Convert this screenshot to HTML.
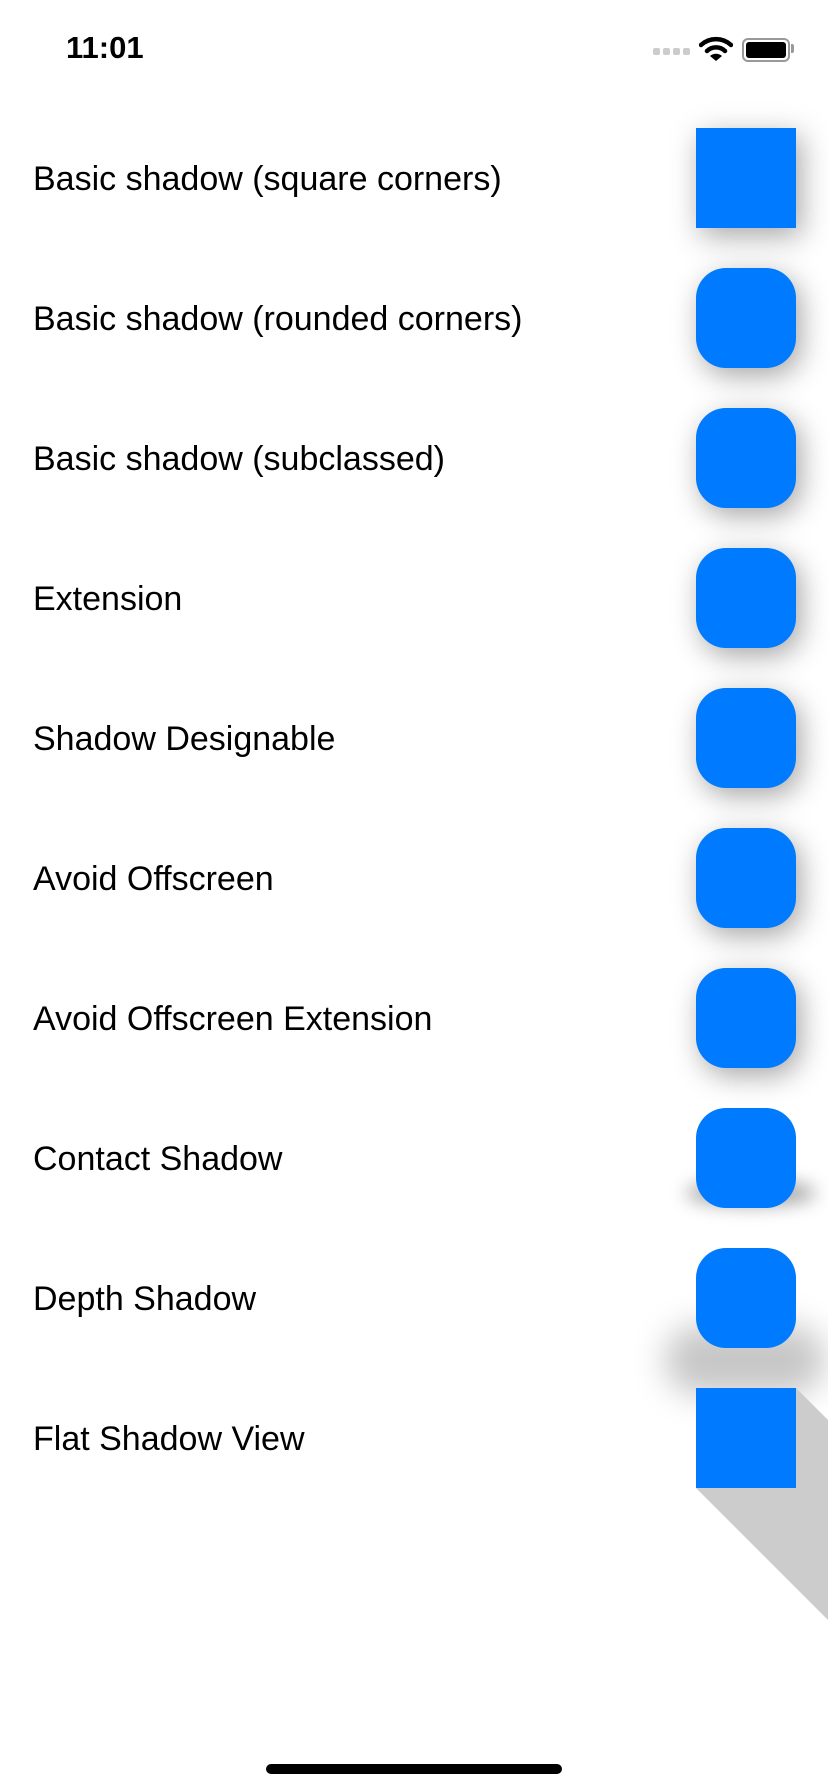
<!DOCTYPE html>
<html><head><meta charset="utf-8"><style>
html,body{margin:0;padding:0;background:#fff;}
body{width:828px;height:1792px;position:relative;overflow:hidden;font-family:"Liberation Sans",sans-serif;}
.t{position:absolute;left:33px;font-size:34px;color:#000;line-height:40px;}
.b{position:absolute;left:696px;width:100px;height:100px;background:#007aff;border-radius:30px;}
.s{box-shadow:5px 8px 28px rgba(0,0,0,.35);}
</style></head><body>
<div style="position:absolute;left:66px;top:30px;font-size:31px;font-weight:bold;">11:01</div>
<div style="position:absolute;left:653px;top:48px;line-height:0">
<span style="display:inline-block;width:7px;height:7px;background:#ccc;border-radius:2px;margin-right:3px"></span><span style="display:inline-block;width:7px;height:7px;background:#ccc;border-radius:2px;margin-right:3px"></span><span style="display:inline-block;width:7px;height:7px;background:#ccc;border-radius:2px;margin-right:3px"></span><span style="display:inline-block;width:7px;height:7px;background:#ccc;border-radius:2px"></span></div>
<svg style="position:absolute;left:699px;top:36px" width="34" height="26" viewBox="0 0 34 26"><path d="M2 9 A22 22 0 0 1 32 9" stroke="#000" stroke-width="4.5" fill="none" stroke-linecap="round"/><path d="M8 15 A13 13 0 0 1 26 15" stroke="#000" stroke-width="4.5" fill="none" stroke-linecap="round"/><path d="M11 20 L17 25 L23 20 A9 9 0 0 0 11 20Z" fill="#000"/></svg>
<div style="position:absolute;left:742px;top:38px;width:44px;height:20px;border:2px solid #999;border-radius:6px;"><div style="margin:2px;height:16px;background:#000;border-radius:3px"></div></div>
<div style="position:absolute;left:791px;top:44px;width:3px;height:9px;background:#999;border-radius:0 2px 2px 0"></div>

<div class="t" style="top:159px">Basic shadow (square corners)</div>
<div class="t" style="top:299px">Basic shadow (rounded corners)</div>
<div class="t" style="top:439px">Basic shadow (subclassed)</div>
<div class="t" style="top:579px">Extension</div>
<div class="t" style="top:719px">Shadow Designable</div>
<div class="t" style="top:859px">Avoid Offscreen</div>
<div class="t" style="top:999px">Avoid Offscreen Extension</div>
<div class="t" style="top:1139px">Contact Shadow</div>
<div class="t" style="top:1279px">Depth Shadow</div>
<div class="t" style="top:1419px">Flat Shadow View</div>

<div class="b s" style="top:128px;border-radius:0"></div>
<div class="b s" style="top:268px"></div>
<div class="b s" style="top:408px"></div>
<div class="b s" style="top:548px"></div>
<div class="b s" style="top:688px"></div>
<div class="b s" style="top:828px"></div>
<div class="b s" style="top:968px"></div>
<div style="position:absolute;left:686px;top:1180px;width:130px;height:26px;border-radius:50%;background:rgba(0,0,0,.35);filter:blur(9px)"></div>
<div class="b" style="top:1108px"></div>
<div style="position:absolute;left:665px;top:1325px;width:160px;height:70px;border-radius:35px;background:rgba(0,0,0,.22);filter:blur(16px)"></div>
<div class="b" style="top:1248px"></div>
<svg style="position:absolute;left:0;top:0" width="828" height="1792"><polygon points="796,1388 828,1420 828,1620 696,1488" fill="#ccc"/></svg>
<div class="b" style="top:1388px;border-radius:0"></div>

<div style="position:absolute;left:266px;top:1764px;width:296px;height:10px;background:#000;border-radius:5px"></div>
</body></html>
